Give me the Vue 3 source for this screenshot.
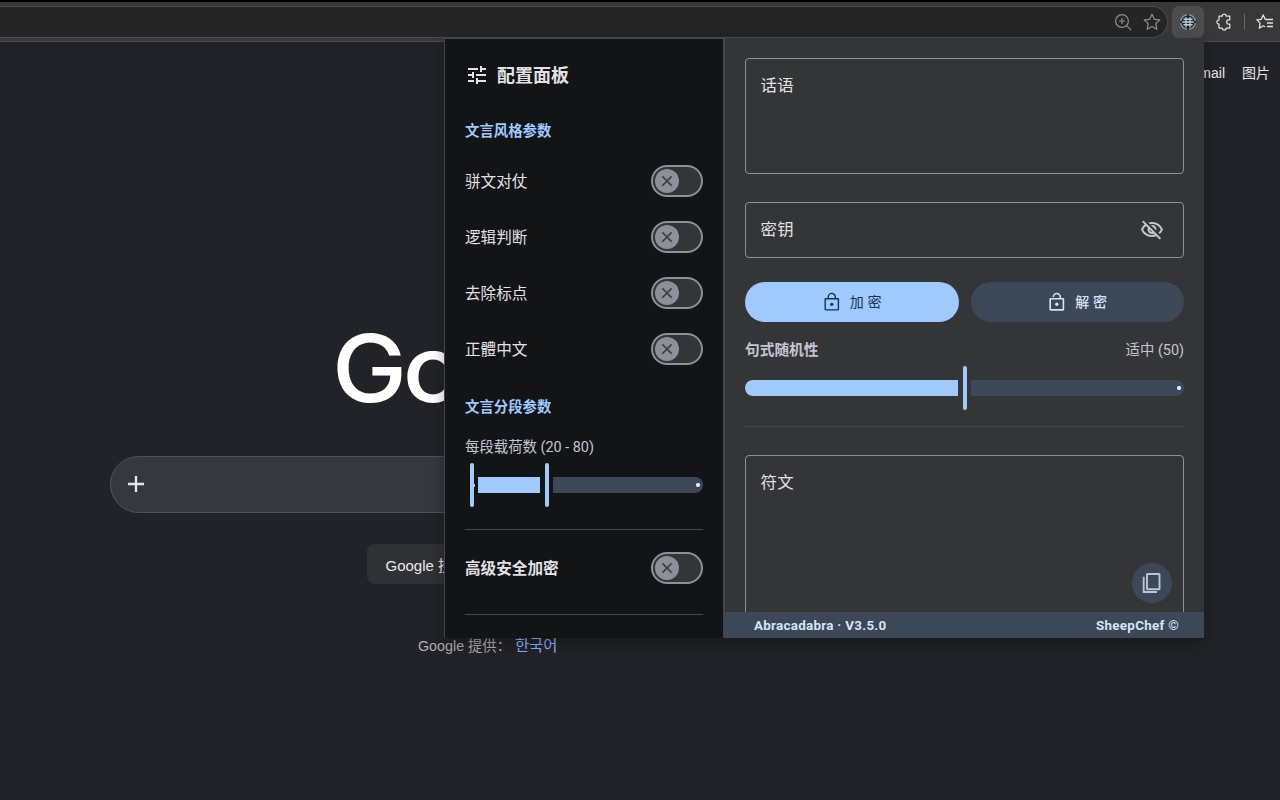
<script setup>
const styleOptions = ['骈文对仗', '逻辑判断', '去除标点', '正體中文']
</script>

<template>
  <div class="screen">
    <header class="toolbar">
      <div class="address">
        <svg class="tool" width="20" height="20" viewBox="0 0 20 20" fill="none" stroke="#8d8d8d" stroke-width="1.2">
          <circle cx="9" cy="9" r="6.4" /><path d="M9 6v6M6 9h6M13.6 13.6l4.6 4.6" />
        </svg>
        <svg class="tool star" width="20" height="20" viewBox="0 0 20 20" fill="none" stroke="#8d8d8d" stroke-width="1.2" stroke-linejoin="round">
          <path d="M10 2.2l2.3 5.1 5.5.6-4.1 3.8 1.2 5.6-4.9-2.8-4.9 2.8 1.2-5.6-4.1-3.8 5.5-.6z" />
        </svg>
      </div>
      <div class="ext">
        <svg width="18" height="18" viewBox="0 0 18 18" fill="none">
          <circle cx="9" cy="9" r="7.3" fill="#1b252e" stroke="#83949f" stroke-width="1.4" />
          <path d="M4.5 6.2h9M3 9h12M4.5 11.8h9" stroke="#c9d8e0" stroke-width="1.5" />
          <path d="M7 4v10.5M11 4v10.5" stroke="#b4c5d0" stroke-width="1.4" />
          <path d="M9 .8v2.6M9 14.6v2.6M.8 9h2.6M14.6 9h2.6" stroke="#14191e" stroke-width="1.4" />
        </svg>
      </div>
      <svg class="puzzle" width="18" height="18" viewBox="0 0 18 18" fill="none" stroke="#e4e4e4" stroke-width="1.2" stroke-linejoin="round">
        <path d="M4 3.2h3.2a2 2 0 0 1 4 0h3.6v3.6h-1a2.2 2.2 0 0 0 0 4.4h1v3.9h-3.6a2 2 0 0 1-4 0H4v-3.9a2.1 2.1 0 0 1 0-4.2z" />
      </svg>
      <i class="sep"></i>
      <svg class="fav" width="18" height="18" viewBox="0 0 18 18" fill="none" stroke="#e4e4e4" stroke-width="1.3" stroke-linejoin="round">
        <path d="M10.5 6.5L9.2 6.3 7.2 2 5.2 6.3l-4.3.6 3.2 3.2-.8 5.1 4-2.4 1.8 1M10.5 6.5H17M11 10h6M11 13.5h6" />
      </svg>
    </header>

    <main class="page">
      <nav class="links"><span>Gmail</span><span>图片</span></nav>
      <div class="logo">Go</div>
      <div class="search">
        <svg width="16" height="16" viewBox="0 0 16 16" stroke="#e8e8ec" stroke-width="2.3"><path d="M8 0v16M0 8h16" /></svg>
      </div>
      <div class="gbtn">Google 搜索</div>
      <div class="offered">Google 提供： <span>한국어</span></div>
    </main>

    <div class="popup">
      <aside class="side">
        <div class="title">
          <svg width="24" height="24" viewBox="0 0 24 24" fill="#e2e2e6">
            <path d="M3 17v2h6v-2H3zM3 5v2h10V5H3zm10 16v-2h8v-2h-8v-2h-2v6h2zM7 9v2H3v2h4v2h2V9H7zm14 4v-2H11v2h10zm-6-4h2V7h4V5h-4V3h-2v6z" />
          </svg>
          <span>配置面板</span>
        </div>
        <div class="sub">文言风格参数</div>
        <div v-for="o in styleOptions" :key="o" class="option">
          <span>{{ o }}</span>
          <div class="switch"><i><svg width="16" height="16" viewBox="0 0 16 16"><path d="M3.4 3.4l9.2 9.2M12.6 3.4l-9.2 9.2" stroke="#3c3e42" stroke-width="1.5" /></svg></i></div>
        </div>
        <div class="sub second">文言分段参数</div>
        <div class="caption">每段载荷数 (20 - 80)</div>
        <div class="slider range">
          <b class="handle first"></b><b class="fill"></b><b class="handle"></b><b class="track"></b>
        </div>
        <hr />
        <div class="option strong">
          <span>高级安全加密</span>
          <div class="switch"><i><svg width="16" height="16" viewBox="0 0 16 16"><path d="M3.4 3.4l9.2 9.2M12.6 3.4l-9.2 9.2" stroke="#3c3e42" stroke-width="1.5" /></svg></i></div>
        </div>
        <hr class="last" />
      </aside>

      <section class="body">
        <div class="content">
          <div class="field area">话语</div>
          <div class="field key">
            <span>密钥</span>
            <svg width="24" height="24" viewBox="0 0 24 24" fill="#c4c6d0">
              <path d="M12 6c3.79 0 7.17 2.13 8.82 5.5-.59 1.22-1.42 2.27-2.41 3.12l1.41 1.41c1.39-1.23 2.49-2.77 3.18-4.53C21.27 7.11 17 4 12 4c-1.27 0-2.49.2-3.64.57l1.65 1.65C10.66 6.09 11.32 6 12 6zm-1.07 1.14L13 9.21c.57.25 1.03.71 1.28 1.28l2.07 2.07c.08-.34.14-.7.14-1.07C16.5 9.01 14.48 7 12 7c-.37 0-.72.05-1.07.14zM2.01 3.87l2.68 2.68C3.06 7.83 1.77 9.53 1 11.5 2.73 15.89 7 19 12 19c1.52 0 2.98-.29 4.32-.82l3.42 3.42 1.41-1.41L3.42 2.45 2.01 3.87zm7.5 7.5l2.61 2.61c-.04.01-.08.02-.12.02-1.38 0-2.5-1.12-2.5-2.5 0-.05.01-.08.01-.13zm-3.4-3.4l1.75 1.75c-.23.55-.36 1.15-.36 1.78 0 2.48 2.02 4.5 4.5 4.5.63 0 1.23-.13 1.77-.36l.98.98c-.88.24-1.8.38-2.75.38-3.79 0-7.17-2.13-8.82-5.5.7-1.43 1.72-2.61 2.93-3.53z" />
            </svg>
          </div>
          <div class="actions">
            <div class="btn primary">
              <svg width="20" height="20" viewBox="0 0 20 20" fill="none" stroke="currentColor" stroke-width="1.4">
                <rect x="3.2" y="6.7" width="13.2" height="11.2" rx=".6" /><path d="M6.3 6.5V4.9a3.5 3.5 0 0 1 7 0V6.5" /><circle cx="9.8" cy="12.3" r="1.6" fill="currentColor" stroke="none" />
              </svg>
              <span>加 密</span>
            </div>
            <div class="btn tonal">
              <svg width="20" height="20" viewBox="0 0 20 20" fill="none" stroke="currentColor" stroke-width="1.6">
                <rect x="3.2" y="6.7" width="13.2" height="11.2" rx=".6" /><path d="M6.3 5a3.5 3.5 0 0 1 7 0V6.5" /><circle cx="9.8" cy="12.3" r="1.7" fill="currentColor" stroke="none" />
              </svg>
              <span>解 密</span>
            </div>
          </div>
          <div class="random"><strong>句式随机性</strong><span>适中 (50)</span></div>
          <div class="slider single">
            <b class="fill"></b><b class="handle"></b><b class="track"></b>
          </div>
          <hr />
          <div class="field result">符文
            <div class="copy">
              <svg width="24" height="24" viewBox="0 0 24 24" fill="none" stroke="#bcc7d6" stroke-width="1.9">
                <rect x="7" y="3" width="12.5" height="15.3" rx=".6" /><path d="M3.7 5.8V21H17" />
              </svg>
            </div>
          </div>
        </div>
        <footer><span>Abracadabra · V3.5.0</span><span>SheepChef ©</span></footer>
      </section>
    </div>
  </div>
</template>

<style>
body { margin: 0; background: #222328; }
</style>

<style scoped>
* { box-sizing: border-box; }
svg { display: block; flex: none; }
.screen {
  position: relative; width: 1280px; height: 800px; overflow: hidden; background: #222328;
  font-family: Roboto, "Noto Sans CJK SC", sans-serif; color: #e2e2e6;
}
.toolbar {
  height: 42px; background: #383838; border-top: 2px solid #000; border-bottom: 1px solid #484848;
  display: flex; align-items: flex-start;
}
.address {
  width: 1168px; height: 32px; margin-top: 4px; background: #252525; border: 1px solid #4c4c4c; border-left: 0;
  border-radius: 0 16px 16px 0; display: flex; align-items: center; justify-content: flex-end; padding-right: 5px; gap: 9px;
}
.ext {
  width: 32px; height: 32px; margin: 4px 0 0 4px; border-radius: 7px; background: #4d4d4d;
  display: flex; align-items: center; justify-content: center;
}
.puzzle { margin: 11px 0 0 11px; }
.sep { width: 1px; height: 16px; background: #6a6a6a; margin: 12px 0 0 11px; }
.fav { margin: 11px 0 0 11px; }

.page { height: 758px; font-family: "Liberation Sans", "Noto Sans CJK SC", sans-serif; overflow: hidden; }
.links { display: flex; justify-content: flex-end; gap: 17px; padding: 21px 10px 0 0; font-size: 14px; line-height: 20px; color: #e8e8e8; }
.logo {
  width: 150px; height: 106px; margin: 230px 0 0 332px; font: 500 93px/111px Inter, sans-serif;
  letter-spacing: -4px; color: #fff; white-space: nowrap; transform: scaleX(1.08); transform-origin: left;
}
.search {
  width: 760px; height: 57px; margin: 37px 0 0 110px; border-radius: 29px; border: 1px solid #505256; background: #36383f;
  display: flex; align-items: center; padding: 0 0 1px 17px;
}
.gbtn {
  width: 120px; height: 40px; margin: 31px 0 0 367px; border-radius: 8px; background: #303134; color: #e8eaed;
  font-size: 15px; line-height: 44px; padding-left: 18.5px; white-space: nowrap;
}
.offered { margin: 49px 0 0 418px; font-size: 14.3px; line-height: 22px; color: #b0b0b0; white-space: nowrap; }
.offered span { color: #8ab4f8; font-family: "Noto Sans CJK KR", sans-serif; font-size: 15.4px; }

.popup {
  position: absolute; left: 444px; top: 38px; width: 760px; height: 600px; display: flex;
  box-shadow: 0 6px 14px rgba(0, 0, 0, .3); overflow: visible;
}
.side {
  width: 279px; height: 600px; background: #131416; border-left: 1px solid #44464c; border-top: 1px solid #44464c;
  padding: 0 20px; overflow: hidden;
}
.title { height: 72px; display: flex; align-items: center; gap: 8px; font-size: 18px; font-weight: 700; }
.title span { padding-bottom: 2px; }
.sub { height: 40px; line-height: 42px; margin-bottom: 2px; font-size: 14.4px; font-weight: 700; color: #a0cafd; }
.sub.second { height: 60px; line-height: 62px; margin: 0; }
.option { height: 56px; display: flex; align-items: center; justify-content: space-between; font-size: 15.6px; }
.option span { padding-bottom: 3px; }
.option.strong { height: 76px; font-weight: 700; }
.switch {
  width: 52px; height: 32px; border-radius: 16px; border: 2px solid #8e9099; background: #333537;
  display: flex; align-items: center; padding-left: 2px;
}
.switch i { width: 24px; height: 24px; border-radius: 50%; background: #8e9099; display: flex; align-items: center; justify-content: center; }
.caption { height: 20px; line-height: 22px; font-size: 14.4px; color: #c4c6cf; }
.slider { height: 44px; display: flex; align-items: center; }
.slider b { display: block; height: 16px; flex: none; }
.slider .handle { width: 4px; height: 44px; border-radius: 2px; background: #a0cafd; }
.slider .fill { background: #a0cafd; }
.slider .track {
  flex: 1; border-radius: 0 8px 8px 0;
  background: radial-gradient(circle at calc(100% - 5px) 50%, #d7e3f7 0, #d7e3f7 1.8px, #3c4858 2.4px);
}
.range { margin-top: 6px; padding-left: 5px; }
.range .first { margin-right: 4px; position: relative; }
.range .first::after { content: ""; position: absolute; left: 4px; top: 20.5px; width: 1px; height: 3px; background: #b9c3d0; }
.range .fill { width: 62px; margin-right: 5px; }
.range .track, .single .track { margin-left: 4px; }
.single .fill { width: 213px; margin-right: 5px; border-radius: 8px 0 0 8px; }
hr { height: 1px; border: 0; margin: 22px 0 0; background: #44464c; }
hr.last { margin-top: 8px; }

.body {
  flex: 1; min-width: 0; height: 600px; background: #333537; display: flex; flex-direction: column;
  overflow: hidden;
}
.content { flex: 1; min-height: 0; overflow: hidden; border-left: 2px solid #44464c; padding: 20px 20px 0; }
.field {
  border: 1px solid #8e9099; border-radius: 4px; font-size: 16.4px; letter-spacing: .4px; padding: 0 14.5px; line-height: 24px;
}
.area { height: 116px; padding-top: 15px; }
.key { height: 56px; margin-top: 28px; display: flex; align-items: center; justify-content: space-between; padding-right: 19px; }
.actions { display: flex; gap: 12px; margin-top: 24px; }
.btn {
  flex: 1; height: 40px; border-radius: 20px; display: flex; align-items: center; justify-content: center; gap: 8px;
  font-size: 14px; font-weight: 400; letter-spacing: .1px;
}
.btn span { white-space: pre; padding-bottom: 3px; }
.primary { background: #a0cafd; color: #103456; }
.tonal { background: #3c4858; color: #d7e3f7; font-weight: 500; }
.random {
  display: flex; justify-content: space-between; height: 20px; line-height: 22px; margin: 18px 0 6px; font-size: 14.4px; color: #c4c6cf;
}
.random strong { font-size: 14.7px; line-height: 21px; }
.content hr { margin-top: 16px; }
.result { position: relative; height: 170px; margin-top: 28px; padding-top: 15px; }
.copy {
  position: absolute; right: 11px; top: 107px; width: 40px; height: 40px; border-radius: 50%; background: #3c4858;
  display: flex; align-items: center; justify-content: center;
}
footer {
  height: 26px; background: #3c4856; display: flex; justify-content: space-between; padding: 0 25px 0 31px;
  font-size: 13.4px; line-height: 27px; font-weight: 700; color: #d7e3f7; letter-spacing: .28px;
}
</style>
